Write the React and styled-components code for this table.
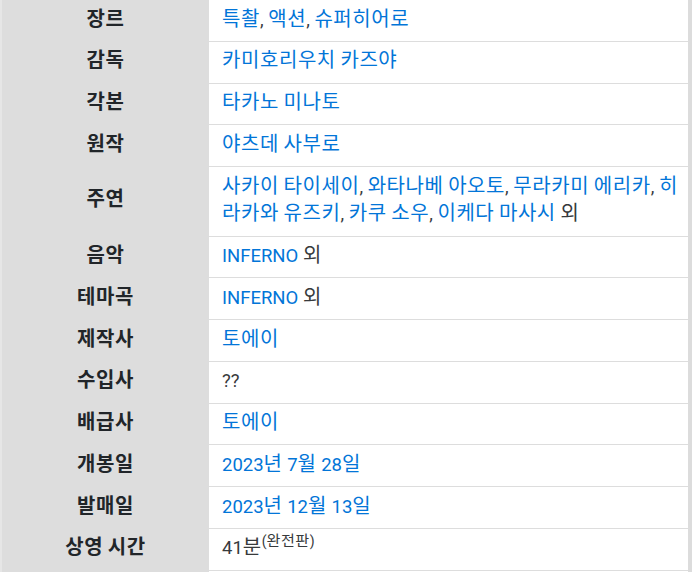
import React from 'react'
import styled, { createGlobalStyle } from 'styled-components'

const Global = createGlobalStyle`
  html, body {
    margin: 0;
    padding: 0;
    background: #ffffff;
  }
  body {
    font-family: Roboto, "Noto Sans CJK KR", "Liberation Sans", sans-serif;
  }
`

const Table = styled.div`
  width: 692px;
  height: 572px;
  overflow: hidden;
  box-sizing: border-box;
  border-left: 2px solid #e6e6e6;
  border-right: 4px solid #dcdcdc;
  display: grid;
  grid-template-columns: 207px 1fr;
  align-content: start;
  background: linear-gradient(to right, #dddddd 207px, #ffffff 207px);
`

const Label = styled.div`
  background: #dddddd;
  font-weight: 700;
  font-size: 18.5px;
  line-height: 27.75px;
  color: #212529;
  display: flex;
  align-items: center;
  justify-content: center;
  padding: 6.5px 8px;
  border-bottom: 1px solid #dddddd;
`

const Value = styled.div`
  background: #ffffff;
  font-size: 18.5px;
  line-height: 27.75px;
  color: #373a3c;
  padding: 6.5px 10px 6.5px 13px;
  border-bottom: 1px solid #dddddd;
`

// hangul runs are set a bit larger, like the wider Korean face in the original
const Ko = styled.span`
  font-size: 1.08em;
  letter-spacing: 0.03em;
  line-height: 1;
`

const Link = styled.span`
  color: #0275d8;
`

const Sup = styled.sup`
  font-size: 14px;
  line-height: 0;
  position: relative;
  top: -1px;
`

const ko = (text) =>
  text.split(/([\uAC00-\uD7A3\u3131-\u318E]+)/).map((part, i) =>
    /[\uAC00-\uD7A3\u3131-\u318E]/.test(part) ? <Ko key={i}>{part}</Ko> : part
  )

const L = ({ children }) => <Link>{ko(children)}</Link>

const joinLinks = (items, tail) => (
  <>
    {items.map((t, i) => (
      <React.Fragment key={t}>
        <L>{t}</L>
        {i < items.length - 1 ? ', ' : ''}
      </React.Fragment>
    ))}
    {tail ? ko(tail) : null}
  </>
)

const rows = [
  ['장르', joinLinks(['특촬', '액션', '슈퍼히어로'])],
  ['감독', <L>카미호리우치 카즈야</L>],
  ['각본', <L>타카노 미나토</L>],
  ['원작', <L>야츠데 사부로</L>],
  ['주연', joinLinks(['사카이 타이세이', '와타나베 아오토', '무라카미 에리카', '히라카와 유즈키', '카쿠 소우', '이케다 마사시'], ' 외')],
  ['음악', <><L>INFERNO</L> {ko('외')}</>],
  ['테마곡', <><L>INFERNO</L> {ko('외')}</>],
  ['제작사', <L>토에이</L>],
  ['수입사', '??'],
  ['배급사', <L>토에이</L>],
  ['개봉일', <L>2023년 7월 28일</L>],
  ['발매일', <L>2023년 12월 13일</L>],
  ['상영 시간', <>{ko('41분')}<Sup>{ko('(완전판)')}</Sup></>],
]

const App = () => {
  return (
    <>
      <Global />
      <Table>
        {rows.map(([label, value]) => (
          <React.Fragment key={label}>
            <Label>
              <span>{ko(label)}</span>
            </Label>
            <Value>{value}</Value>
          </React.Fragment>
        ))}
      </Table>
    </>
  )
}

export default App
